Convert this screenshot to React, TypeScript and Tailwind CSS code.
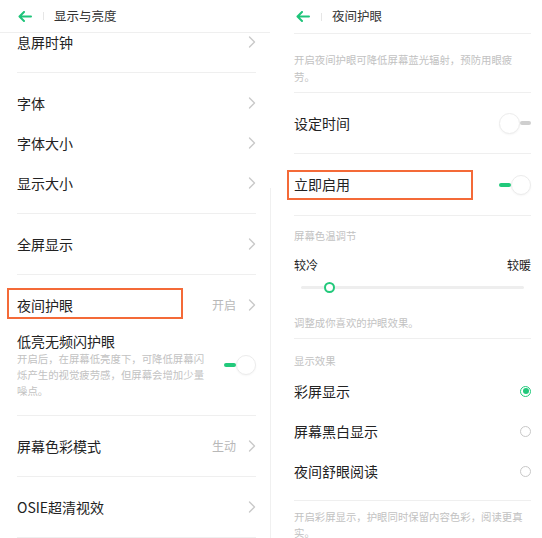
import React from "react"

const font = { fontFamily: '"Noto Sans CJK SC", "Noto Sans", sans-serif' }

function Back() {
  return (
    <svg width="14" height="11" viewBox="0 0 14 11" fill="none">
      <path d="M13 5.5H2M6 1L1.5 5.5L6 10" stroke="#1fc47a" strokeWidth="2" strokeLinecap="round" strokeLinejoin="round" />
    </svg>
  )
}

function Chevron() {
  return (
    <svg width="8" height="12" viewBox="0 0 8 12" fill="none" className="shrink-0">
      <path d="M1.5 1L6.5 6L1.5 11" stroke="#c9c9c9" strokeWidth="1.4" strokeLinecap="round" strokeLinejoin="round" />
    </svg>
  )
}

function Toggle({ on }: { on: boolean }) {
  if (on) {
    return (
      <div className="flex items-center">
        <div className="h-[4px] w-[12px] rounded-full bg-[#22c97b]" />
        <div className="h-[20px] w-[20px] rounded-full border border-[#ececec] bg-white shadow-[0_1px_2px_rgba(0,0,0,0.04)]" />
      </div>
    )
  }
  return (
    <div className="flex items-center">
      <div className="h-[21px] w-[21px] rounded-full border border-[#ececec] bg-white shadow-[0_1px_2px_rgba(0,0,0,0.04)]" />
      <div className="h-[4px] w-[11px] rounded-full bg-[#cfcfcf]" />
    </div>
  )
}

function Radio({ on }: { on: boolean }) {
  if (on) {
    return (
      <div className="flex h-[11px] w-[11px] items-center justify-center rounded-full border-[1.5px] border-[#22c97b]">
        <div className="h-[6px] w-[6px] rounded-full bg-[#22c97b]" />
      </div>
    )
  }
  return <div className="h-[11px] w-[11px] rounded-full border border-[#c8c8c8]" />
}

function Sep() {
  return <div className="h-px bg-[#efefef]" />
}

function NavRow({ label, value, h = "h-[40px]" }: { label: string; value?: string; h?: string }) {
  return (
    <div className={`flex ${h} items-center justify-between`}>
      <span className="text-[14px] text-[#222]">{label}</span>
      <div className="flex items-center gap-[12px]">
        {value && <span className="text-[12px] text-[#b8b8b8]">{value}</span>}
        <Chevron />
      </div>
    </div>
  )
}

function LeftPanel() {
  return (
    <div className="w-[270px] shrink-0 overflow-hidden">
      <div className="flex h-[33px] items-center border-b border-[#efefef] pl-[18px]">
        <Back />
        <div className="ml-[11px] h-[8px] w-px bg-[#e6e6e6]" />
        <span className="ml-[10px] text-[12.5px] text-[#333]">显示与亮度</span>
      </div>
      <div className="pl-[17px] pr-[14px]">
        <div className="pb-[21px]">
          <NavRow label="息屏时钟" h="h-[18px]" />
        </div>
        <Sep />
        <div className="pb-[10px] pt-[10px]">
          <NavRow label="字体" />
          <NavRow label="字体大小" />
          <NavRow label="显示大小" />
        </div>
        <Sep />
        <div className="pb-[10px] pt-[10px]">
          <NavRow label="全屏显示" />
        </div>
        <Sep />
        <div className="pb-[10px] pt-[10px]">
          <div className="relative">
            <NavRow label="夜间护眼" value="开启" />
            <div className="absolute left-[-10px] top-[3px] h-[31px] w-[176px] border-2 border-[#f46a38]" />
          </div>
          <div className="flex items-center justify-between pb-[6px] pt-[6px]">
            <div>
              <div className="flex h-[20px] items-center text-[14px] text-[#222]">低亮无频闪护眼</div>
              <div className="text-[10.4px] leading-[16px] text-[#c2c2c2]">
                <div>开启后，在屏幕低亮度下，可降低屏幕闪</div>
                <div>烁产生的视觉疲劳感，但屏幕会增加少量</div>
                <div>噪点。</div>
              </div>
            </div>
            <Toggle on />
          </div>
        </div>
        <Sep />
        <div className="pb-[10px] pt-[10px]">
          <NavRow label="屏幕色彩模式" value="生动" />
        </div>
        <Sep />
        <div className="pb-[10px] pt-[10px]">
          <NavRow label="OSIE超清视效" />
        </div>
        <Sep />
      </div>
    </div>
  )
}

function RightPanel() {
  return (
    <div className="w-[271px] shrink-0 overflow-hidden pl-[23px] pr-[11px]">
      <div className="flex h-[34px] items-center border-b border-[#efefef]">
        <div className="ml-[2px]">
          <Back />
        </div>
        <div className="ml-[11px] h-[8px] w-px bg-[#e6e6e6]" />
        <span className="ml-[10px] text-[12.5px] text-[#333]">夜间护眼</span>
      </div>
      <div className="pb-[7px] pt-[17px] text-[10.4px] leading-[17px] text-[#c2c2c2]">
        <div>开启夜间护眼可降低屏幕蓝光辐射，预防用眼疲</div>
        <div>劳。</div>
      </div>
      <Sep />
      <div className="flex h-[60px] items-center justify-between">
        <span className="text-[14px] text-[#222]">设定时间</span>
        <Toggle on={false} />
      </div>
      <Sep />
      <div className="relative flex h-[61px] items-center justify-between">
        <span className="text-[14px] text-[#222]">立即启用</span>
        <Toggle on />
        <div className="absolute left-[-7px] top-[16px] h-[30px] w-[186px] border-2 border-[#f46a38]" />
      </div>
      <Sep />
      <div className="pb-[7px] pt-[10px]">
        <div className="flex h-[20px] items-center text-[10.4px] text-[#c2c2c2]">屏幕色温调节</div>
        <div className="mt-[9px] flex h-[20px] items-center justify-between text-[12px] text-[#222]">
          <span>较冷</span>
          <span>较暖</span>
        </div>
        <div className="mt-[5px] flex h-[14px] items-center pl-[7px] pr-[7px]">
          <div className="relative h-[3px] flex-1 rounded-full bg-[#eeeeee]">
            <div className="absolute left-[23px] top-[-4px] h-[11px] w-[11px] rounded-full border-2 border-[#22c97b] bg-white" />
          </div>
        </div>
        <div className="mt-[21px] flex h-[16px] items-center text-[10.4px] text-[#c2c2c2]">调整成你喜欢的护眼效果。</div>
      </div>
      <Sep />
      <div className="pb-[9px] pt-[12px]">
        <div className="flex h-[20px] items-center text-[10.4px] text-[#c2c2c2]">显示效果</div>
        <div className="flex h-[40px] items-center justify-between">
          <span className="text-[14px] text-[#222]">彩屏显示</span>
          <Radio on />
        </div>
        <div className="flex h-[40px] items-center justify-between">
          <span className="text-[14px] text-[#222]">屏幕黑白显示</span>
          <Radio on={false} />
        </div>
        <div className="flex h-[40px] items-center justify-between">
          <span className="text-[14px] text-[#222]">夜间舒眼阅读</span>
          <Radio on={false} />
        </div>
      </div>
      <Sep />
      <div className="pt-[8px] text-[10.4px] leading-[16px] text-[#c2c2c2]">
        <div>开启彩屏显示，护眼同时保留内容色彩，阅读更真</div>
        <div>实。</div>
      </div>
    </div>
  )
}

export default function App() {
  return (
    <div className="flex h-[538px] w-[542px] overflow-hidden bg-white" style={font}>
      <LeftPanel />
      <div className="mt-[188px] w-px shrink-0 bg-[#f0f0f0]" />
      <RightPanel />
    </div>
  )
}
